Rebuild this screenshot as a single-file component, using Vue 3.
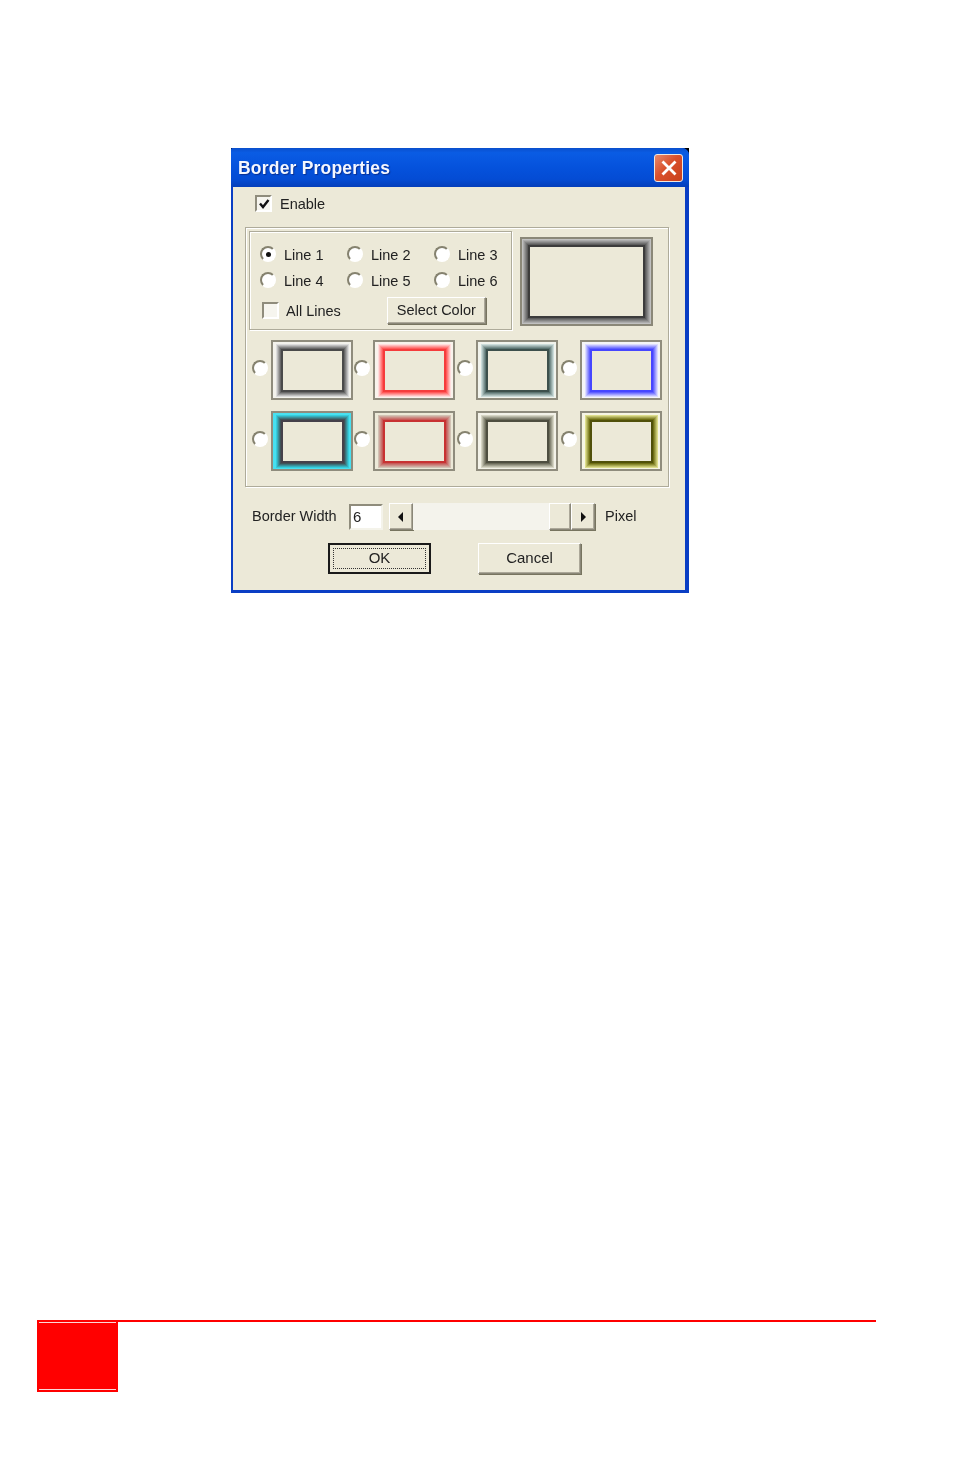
<template>
  <div class="page">
    <div class="dialog">
      <div class="window">
        <div class="titlebar">
          <span class="title">Border Properties</span>
          <button class="close">
            <svg width="18" height="18" viewBox="0 0 18 18">
              <path d="M2.5 2.5 L15.5 15.5 M15.5 2.5 L2.5 15.5" stroke="#fff" stroke-width="2.8" fill="none" />
            </svg>
          </button>
        </div>
        <div class="client">
          <div class="enable-row">
            <span class="check">
              <svg width="12" height="12" viewBox="0 0 12 12">
                <path d="M2 5.5 L5 9 L10.5 2" stroke="#111" stroke-width="2.4" fill="none" />
              </svg>
            </span>
            <span class="label enable-label">Enable</span>
          </div>

          <div class="group outer">
            <div class="top-row">
              <div class="group lines">
                <div class="line-grid">
                  <div v-for="n in 6" :key="n" class="line-item">
                    <span class="radio" :class="{ on: n === 1 }"></span>
                    <span class="label">Line {{ n }}</span>
                  </div>
                </div>
                <div class="lines-foot">
                  <span class="check small"></span>
                  <span class="label all-lines">All Lines</span>
                  <button class="btn select-color">Select Color</button>
                </div>
              </div>
              <div class="preview">
                <div class="frame big" :style="frameStyle(previewFrame)"></div>
              </div>
            </div>

            <div class="swatches">
              <template v-for="(s, i) in swatches" :key="i">
                <span class="radio swatch-radio"></span>
                <div class="swatch" :style="{ background: s.mat }">
                  <div class="frame" :style="frameStyle(s)"></div>
                </div>
              </template>
            </div>
          </div>

          <div class="width-row">
            <span class="label width-label">Border Width</span>
            <div class="width-input">6</div>
            <div class="scrollbar">
              <button class="btn arrow">
                <svg width="8" height="10" viewBox="0 0 8 10"><path d="M6 0 V10 L1 5 Z" fill="#111" /></svg>
              </button>
              <div class="track"></div>
              <button class="btn thumb"></button>
              <button class="btn arrow">
                <svg width="8" height="10" viewBox="0 0 8 10"><path d="M2 0 V10 L7 5 Z" fill="#111" /></svg>
              </button>
            </div>
            <span class="label pixel">Pixel</span>
          </div>

          <div class="action-row">
            <button class="btn action default"><span class="focus">OK</span></button>
            <button class="btn action">Cancel</button>
          </div>
        </div>
      </div>
    </div>

    <div class="footer">
      <div class="red-box"><div class="red-inner"></div></div>
    </div>
  </div>
</template>

<script setup>
const previewFrame = { line: '#3c3c3c', from: '#5c5c5c', to: '#c0c0c0', rings: 6, edge: '#8a8778' }

const swatches = [
  { mat: '#f3f2ec', line: '#4a4a4a', from: '#686868', to: '#dcdcdc', rings: 5 },
  { mat: '#f9f3ec', line: '#f53c3c', from: '#ff5a5a', to: '#ffdcdc', rings: 5 },
  { mat: '#f1f3ec', line: '#3d504c', from: '#5a7370', to: '#cbdcda', rings: 5 },
  { mat: '#f5f5f7', line: '#4646ff', from: '#6060ff', to: '#dcdcff', rings: 5 },
  { mat: '#48e0f0', line: '#45414a', from: '#3f5258', to: '#34ccdc', rings: 5 },
  { mat: '#ece9d8', line: '#c83232', from: '#c65a58', to: '#d2c2b4', rings: 5 },
  { mat: '#f3f2e8', line: '#4e4e40', from: '#6c6c5a', to: '#d6d5c4', rings: 5 },
  { mat: '#f6f5e4', line: '#50500a', from: '#6e6e14', to: '#dede8c', rings: 5 }
]

function toRgb(hex) {
  return [1, 3, 5].map(i => parseInt(hex.slice(i, i + 2), 16))
}

// stack of box-shadows, one per pixel ring of the gradient
function frameStyle(f) {
  const a = toRgb(f.from)
  const b = toRgb(f.to)
  const parts = []
  for (let i = 0; i < f.rings; i++) {
    const t = f.rings > 1 ? i / (f.rings - 1) : 0
    const c = a.map((v, k) => Math.round(v + (b[k] - v) * t))
    parts.push(`0 0 0 ${i + 1}px rgb(${c.join(',')})`)
  }
  if (f.edge) parts.push(`0 0 0 ${f.rings + 2}px ${f.edge}`)
  return { borderColor: f.line, boxShadow: parts.join(', ') }
}
</script>

<style>
body {
  background: #fff;
}
</style>

<style scoped>
.page {
  width: 954px;
  height: 1475px;
  padding-top: 148px;
  box-sizing: border-box;
  overflow: hidden;
  background: #fff;
  font-family: 'Liberation Sans', Arial, sans-serif;
}
.dialog {
  width: 458px;
  height: 445px;
  margin-left: 231px;
  background: #000;
  filter: blur(0.35px);
}
.window {
  height: 100%;
  display: flex;
  flex-direction: column;
  border-radius: 2px 7px 0 0;
  overflow: hidden;
  background: #0a3ec4;
}
.titlebar {
  height: 39px;
  flex: none;
  display: flex;
  align-items: center;
  justify-content: space-between;
  padding: 1px 6px 0 7px;
  box-sizing: border-box;
  background: linear-gradient(#0a4fcc 0%, #0a5ce4 12%, #0552dc 50%, #044cd4 80%, #043eba 100%);
}
.title {
  font-family: 'Liberation Sans', sans-serif;
  font-weight: bold;
  font-size: 17.5px;
  letter-spacing: 0.2px;
  color: #f4f7ff;
  text-shadow: 1px 1px 1px #0a2f90;
}
.close {
  width: 29px;
  height: 28px;
  padding: 0;
  display: flex;
  align-items: center;
  justify-content: center;
  border: 1px solid #f0e8e0;
  border-radius: 3px;
  background: linear-gradient(135deg, #e88a6c, #d9502c 45%, #c8401c);
}
.client {
  flex: 1;
  margin: 0 4px 3px 2px;
  background: #ece9d8;
}
.label {
  font-size: 14.5px;
  line-height: 16px;
  color: #222;
  white-space: nowrap;
}
.enable-row {
  display: flex;
  align-items: center;
  padding: 8px 0 0 22px;
}
.enable-label {
  margin-left: 8px;
}
.check {
  width: 17px;
  height: 17px;
  flex: none;
  display: flex;
  align-items: center;
  justify-content: center;
  box-sizing: border-box;
  border: 2px solid;
  border-color: #8f8c7c #fff #fff #8f8c7c;
  background: #f6f5ee;
}
.radio {
  width: 16px;
  height: 16px;
  flex: none;
  display: flex;
  align-items: center;
  justify-content: center;
  box-sizing: border-box;
  border: 2px solid;
  border-color: #85826f #fff #fff #85826f;
  border-radius: 50%;
  background: #fff;
}
.radio.on::after {
  content: '';
  width: 5px;
  height: 5px;
  border-radius: 50%;
  background: #111;
}
.group {
  box-sizing: border-box;
  border: 1px solid #aeab9a;
  box-shadow: 1px 1px 0 #fff, inset 1px 1px 0 #fff;
}
.outer {
  width: 424px;
  height: 260px;
  margin: 15px 0 0 12px;
  padding: 3px;
}
.top-row {
  display: flex;
}
.lines {
  width: 263px;
  height: 99px;
  padding: 9px 0 0 10px;
}
.line-grid {
  display: grid;
  grid-template-columns: repeat(3, 87px);
  grid-auto-rows: 26px;
}
.line-item {
  display: flex;
  align-items: center;
  gap: 8px;
}
.line-item .label {
  margin-top: 2px;
}
.lines-foot {
  display: flex;
  align-items: center;
  margin: 4px 0 0 2px;
}
.all-lines {
  margin-left: 7px;
}
.btn {
  padding: 0 0 2px;
  box-sizing: border-box;
  font-family: inherit;
  font-size: 14.5px;
  color: #222;
  border: 1px solid;
  border-color: #fff #8a8778 #8a8778 #fff;
  box-shadow: inset -1px -1px 0 #aca899, 1px 1px 0 #77745f;
  background: #ece9d8;
}
.select-color {
  width: 99px;
  height: 27px;
  margin-left: 46px;
}
.preview {
  width: 134px;
  height: 89px;
  margin: 6px 0 0 7px;
  display: flex;
  align-items: center;
  justify-content: center;
}
.frame {
  width: 63px;
  height: 43px;
  box-sizing: border-box;
  border: 2px solid;
  background: #ece9d8;
}
.frame.big {
  width: 117px;
  height: 73px;
}
.swatches {
  display: grid;
  grid-template-columns: 19px 82px 20px 82px 21px 82px 22px 82px;
  grid-auto-rows: 60px;
  row-gap: 11px;
  align-items: center;
  margin: 10px 0 0 3px;
}
.swatch-radio {
  justify-self: end;
  margin-right: 3px;
  margin-top: -4px;
}
.swatch {
  height: 60px;
  box-sizing: border-box;
  display: flex;
  align-items: center;
  justify-content: center;
  border: 2px solid #8f8c7d;
}
.width-row {
  display: flex;
  align-items: center;
  height: 27px;
  margin: 16px 0 0 19px;
}
.width-row > .label {
  margin-top: -2px;
}
.width-label {
  width: 97px;
}
.width-input {
  width: 34px;
  height: 26px;
  box-sizing: border-box;
  padding-left: 2px;
  border: 2px solid;
  border-color: #8f8c7c #f4f3ea #f4f3ea #8f8c7c;
  background: #fff;
  font-size: 15px;
  line-height: 21px;
  color: #222;
}
.scrollbar {
  display: flex;
  height: 27px;
  width: 206px;
  margin: 0 10px 0 6px;
}
.arrow {
  width: 24px;
  padding: 0;
  display: flex;
  align-items: center;
  justify-content: center;
}
.thumb {
  width: 22px;
}
.track {
  flex: 1;
  background: #f4f3ec;
}
.action-row {
  display: flex;
  gap: 47px;
  margin: 13px 0 0 95px;
}
.action {
  width: 103px;
  height: 31px;
  font-size: 15px;
}
.action.default {
  border: 2px solid #1a1a1a;
  box-shadow: none;
  padding: 3px;
}
.focus {
  display: block;
  height: 100%;
  line-height: 17px;
  box-sizing: border-box;
  border: 1px dotted #333;
}
.footer {
  width: 839px;
  height: 72px;
  margin: 727px 0 0 37px;
  border-top: 2px solid #f00;
  box-sizing: border-box;
}
.red-box {
  width: 81px;
  height: 72px;
  margin-top: -2px;
  padding: 2px 2px 2px;
  box-sizing: border-box;
  background: #f00;
}
.red-inner {
  height: 100%;
  box-sizing: border-box;
  border-top: 1px solid #fbd8d8;
  border-bottom: 1px solid #fbd8d8;
}
</style>
